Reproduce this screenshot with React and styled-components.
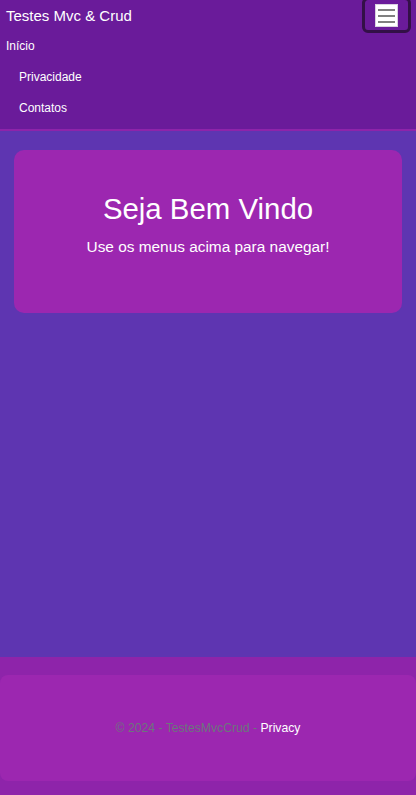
import styled, { createGlobalStyle } from 'styled-components';

const GlobalStyle = createGlobalStyle`
  html, body {
    margin: 0;
    padding: 0;
  }
  body {
    font-family: "Liberation Sans", Arial, sans-serif;
    background: #5e35b1;
  }
  * {
    box-sizing: border-box;
  }
`;

const Page = styled.div`
  display: flex;
  flex-direction: column;
  min-height: 100vh;
`;

const Header = styled.header`
  background: #6a1b9a;
  border-bottom: 2px solid #8e24aa;
  padding-bottom: 5px;
`;

const TopRow = styled.div`
  display: flex;
  justify-content: space-between;
  align-items: flex-start;
  height: 31px;
`;

const Brand = styled.a`
  color: #ffffff;
  font-size: 15px;
  line-height: 18px;
  padding: 7px 0 0 6px;
  text-decoration: none;
`;

const Toggler = styled.button`
  width: 49px;
  height: 36px;
  margin: -3px 5px 0 0;
  padding: 0;
  border: 3px solid #331047;
  border-radius: 6px;
  background: transparent;
  display: flex;
  align-items: center;
  justify-content: center;
  cursor: pointer;

  svg {
    display: block;
  }
`;

const NavList = styled.nav`
  display: flex;
  flex-direction: column;
`;

const NavItem = styled.a`
  display: block;
  height: 31px;
  line-height: 31px;
  font-size: 12px;
  color: #ffffff;
  text-decoration: none;
  padding-left: ${(p) => (p.$nested ? '19px' : '6px')};
`;

const Main = styled.main`
  flex: 1;
  background: #5e35b1;
  padding: 19px 14px;
`;

const WelcomeCard = styled.section`
  background: #9c27b0;
  border-radius: 10px;
  height: 163px;
  padding-top: 41px;
  text-align: center;
  color: #ffffff;
`;

const Title = styled.h1`
  margin: 0;
  font-size: 29.4px;
  line-height: 36px;
  font-weight: normal;
`;

const Lead = styled.p`
  margin: 10px 0 0;
  font-size: 15.4px;
  line-height: 20px;
`;

const Footer = styled.footer`
  background: #8e24aa;
  padding: 18px 0 14px;
`;

const FooterInner = styled.div`
  height: 106px;
  background: #9c27b0;
  border-radius: 8px;
  display: flex;
  align-items: center;
  justify-content: center;
  font-size: 12.2px;
  line-height: 14px;
  color: #6c757d;
`;

const FooterLink = styled.a`
  color: #ffffff;
  text-decoration: none;
`;

function MenuIcon() {
  return (
    <svg width="23" height="23" viewBox="0 0 23 23">
      <rect x="0.5" y="0.5" width="22" height="22" fill="#ffffff" stroke="#d9d2e0" />
      <path d="M3 6h17M3 12h17M3 18h17" stroke="#808080" strokeWidth="2" />
    </svg>
  );
}

export default function App() {
  return (
    <>
      <GlobalStyle />
      <Page>
        <Header>
          <TopRow>
            <Brand href="#">Testes Mvc &amp; Crud</Brand>
            <Toggler aria-label="Menu">
              <MenuIcon />
            </Toggler>
          </TopRow>
          <NavList>
            <NavItem href="#">Início</NavItem>
            <NavItem href="#" $nested>Privacidade</NavItem>
            <NavItem href="#" $nested>Contatos</NavItem>
          </NavList>
        </Header>

        <Main>
          <WelcomeCard>
            <Title>Seja Bem Vindo</Title>
            <Lead>Use os menus acima para navegar!</Lead>
          </WelcomeCard>
        </Main>

        <Footer>
          <FooterInner>
            <span>
              © 2024 - TestesMvcCrud - <FooterLink href="#">Privacy</FooterLink>
            </span>
          </FooterInner>
        </Footer>
      </Page>
    </>
  );
}
